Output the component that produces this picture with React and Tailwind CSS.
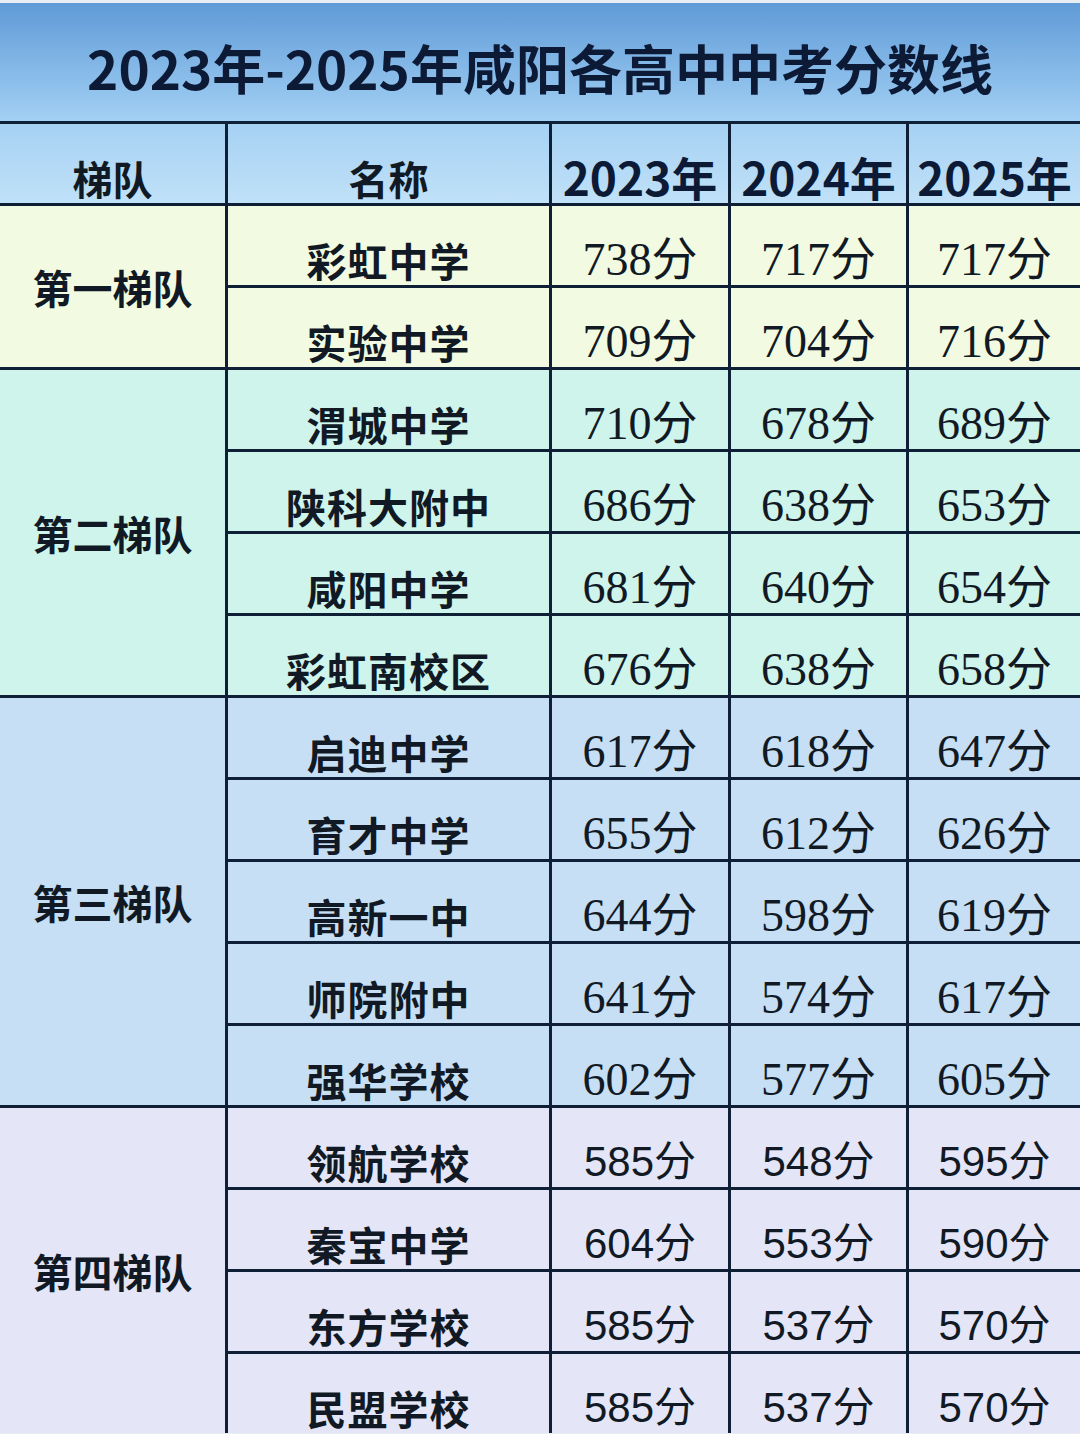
import React from "react";

const tiers = [
  {
    label: "第一梯队",
    bg: "bg-[#f2fbe2]",
    num: "font-['Liberation_Serif','Noto_Sans_CJK_SC',serif] text-[46px]",
    rows: [
      ["彩虹中学", "738", "717", "717"],
      ["实验中学", "709", "704", "716"],
    ],
  },
  {
    label: "第二梯队",
    bg: "bg-[#cff4ec]",
    num: "font-['Liberation_Serif','Noto_Sans_CJK_SC',serif] text-[46px]",
    rows: [
      ["渭城中学", "710", "678", "689"],
      ["陕科大附中", "686", "638", "653"],
      ["咸阳中学", "681", "640", "654"],
      ["彩虹南校区", "676", "638", "658"],
    ],
  },
  {
    label: "第三梯队",
    bg: "bg-[#c7dff4]",
    num: "font-['Liberation_Serif','Noto_Sans_CJK_SC',serif] text-[46px]",
    rows: [
      ["启迪中学", "617", "618", "647"],
      ["育才中学", "655", "612", "626"],
      ["高新一中", "644", "598", "619"],
      ["师院附中", "641", "574", "617"],
      ["强华学校", "602", "577", "605"],
    ],
  },
  {
    label: "第四梯队",
    bg: "bg-[#e4e6f7]",
    num: "font-['Liberation_Sans','Noto_Sans_CJK_SC',sans-serif] text-[42px]",
    rows: [
      ["领航学校", "585", "548", "595"],
      ["秦宝中学", "604", "553", "590"],
      ["东方学校", "585", "537", "570"],
      ["民盟学校", "585", "537", "570"],
    ],
  },
];

const spans = ["row-span-2", "row-span-4", "row-span-5", "row-span-4"];

const App = () => {
  return (
    <div className="w-[1080px] h-[1434px] overflow-hidden bg-[#e9eef3] font-['Noto_Sans_CJK_SC',sans-serif] text-[#111a24]">
      {/* Title */}
      <div className="mt-[3px] h-[118px] bg-linear-to-b from-[#5f9bd7] to-[#a3d0f4] flex items-center justify-center pt-[10px]">
        <h1 className="text-[53px] font-bold leading-none text-[#0c1a36]">
          2023年-2025年咸阳各高中中考分数线
        </h1>
      </div>

      {/* Table */}
      <div className="grid grid-cols-[225px_321px_176px_175px_1fr] auto-rows-[79px] gap-[3px] bg-[#0f2036] border-t-[3px] border-[#0f2036]">
        <div className="bg-linear-to-b from-[#a6d1f3] to-[#c0e1f8] flex items-center justify-center pt-[28px] text-[40px] font-bold leading-none">
          梯队
        </div>
        <div className="bg-linear-to-b from-[#a6d1f3] to-[#c0e1f8] flex items-center justify-center pt-[28px] text-[40px] font-bold leading-none">
          名称
        </div>
        {["2023年", "2024年", "2025年"].map((y) => (
          <div
            key={y}
            className="bg-linear-to-b from-[#a6d1f3] to-[#c0e1f8] flex items-center justify-center pt-[24px] text-[46px] font-bold leading-none text-[#0c1a36] whitespace-nowrap"
          >
            {y}
          </div>
        ))}

        {tiers.map((t, ti) => (
          <React.Fragment key={t.label}>
            <div
              className={`${spans[ti]} ${t.bg} flex items-center justify-center text-[40px] font-bold leading-none`}
            >
              {t.label}
            </div>
            {t.rows.map((r) => (
              <React.Fragment key={r[0]}>
                <div
                  className={`${t.bg} flex items-center justify-center pt-[28px] text-[40px] font-bold leading-none tracking-[1px]`}
                >
                  {r[0]}
                </div>
                {r.slice(1).map((n, i) => (
                  <div
                    key={i}
                    className={`${t.bg} ${t.num} flex items-center justify-center pt-[28px] leading-none`}
                  >
                    {n}分
                  </div>
                ))}
              </React.Fragment>
            ))}
          </React.Fragment>
        ))}
      </div>
    </div>
  );
};

export default App;
